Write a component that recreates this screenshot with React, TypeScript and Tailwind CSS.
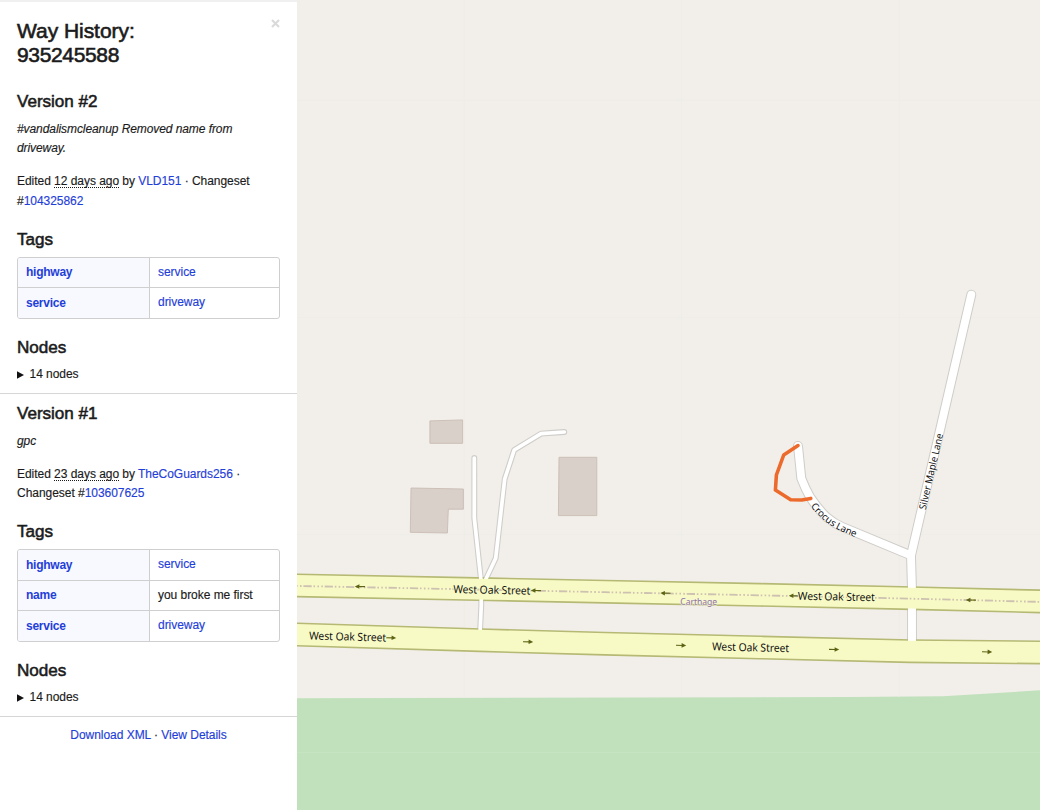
import type { ReactNode } from 'react';

type Tag = { k: string; v: string; plain?: boolean };

const link = 'text-[#1f40d8]';

function H4({ children, className = '' }: { children: ReactNode; className?: string }) {
  return (
    <h4 className={`h-6 text-[17.1px] leading-6 text-[#1b1b1b] [-webkit-text-stroke:0.55px_#1b1b1b] ${className}`}>
      {children}
    </h4>
  );
}

function TagTable({ tags }: { tags: Tag[] }) {
  return (
    <div className="w-[263px] overflow-hidden rounded-[3px] border border-[#cfcfcf]">
      {tags.map((t, i) => (
        <div key={t.k} className={`flex ${i > 0 ? 'h-[30.7px] border-t border-[#cfcfcf]' : 'h-[29.4px]'}`}>
          <div className="w-[132px] border-r border-[#cfcfcf] bg-[#f8f8ff] pt-[5.6px] pl-2 font-bold tracking-[-0.25px] [-webkit-text-stroke:0px]">
            <a className={link}>{t.k}</a>
          </div>
          <div className="pt-[5px] pl-2">{t.plain ? t.v : <a className={link}>{t.v}</a>}</div>
        </div>
      ))}
    </div>
  );
}

function Version({ title, comment, meta, tags }: { title: string; comment: ReactNode; meta: ReactNode; tags: Tag[] }) {
  return (
    <section className="border-b border-[#d6d6d6] pr-[17px] pb-[8.4px] pl-[17px]">
      <H4>{title}</H4>
      <p className="mt-[5.8px] tracking-[-0.08px] italic">{comment}</p>
      <p className="mt-[13.6px]">{meta}</p>
      <H4 className="mt-[16.6px]">Tags</H4>
      <div className="mt-[5.2px]">
        <TagTable tags={tags} />
      </div>
      <H4 className="mt-[17px]">Nodes</H4>
      <div className="mt-[5.2px] flex items-center gap-[5.5px]">
        <svg width="7" height="8" viewBox="0 0 7 8">
          <path d="M0 .2 7 4 0 7.8z" fill="#111" />
        </svg>
        <span>14 nodes</span>
      </div>
    </section>
  );
}

function Ago({ children }: { children: ReactNode }) {
  return (
    <span className="underline decoration-dotted decoration-1 underline-offset-[1.5px] [text-decoration-skip-ink:none]">
      {children}
    </span>
  );
}

function Sidebar() {
  return (
    <aside className="flex w-[297px] shrink-0 flex-col border-t-2 border-[#f0f0f0] bg-white">
      <header className="flex justify-between pt-[17.3px] pr-[17px] pl-[17px]">
        <h2 className="text-[21px] leading-6 text-[#1b1b1b] [-webkit-text-stroke:0.6px_#1b1b1b]">
          Way History:
          <br />
          <span className="tracking-[-0.35px]">935245588</span>
        </h2>
        <svg className="mr-[0.5px]" width="9" height="9" viewBox="0 0 9 9">
          <path d="M1 1 8 8M8 1 1 8" stroke="#dadada" strokeWidth="2.1" />
        </svg>
      </header>
      <div className="h-[22.6px]" />
      <Version
        title="Version #2"
        comment={<>#vandalismcleanup Removed name from<br />driveway.</>}
        meta={
          <>
            Edited <Ago>12 days ago</Ago> by <a className={link}>VLD151</a> · Changeset
            <br />#<a className={link}>104325862</a>
          </>
        }
        tags={[{ k: 'highway', v: 'service' }, { k: 'service', v: 'driveway' }]}
      />
      <div className="h-[8px]" />
      <Version
        title="Version #1"
        comment="gpc"
        meta={
          <>
            Edited <Ago>23 days ago</Ago> by <a className={link}>TheCoGuards256</a> ·
            <br />
            Changeset #<a className={link}>103607625</a>
          </>
        }
        tags={[
          { k: 'highway', v: 'service' },
          { k: 'name', v: 'you broke me first', plain: true },
          { k: 'service', v: 'driveway' },
        ]}
      />
      <footer className="pt-[8.8px] text-center">
        <a className={link}>Download XML</a> · <a className={link}>View Details</a>
      </footer>
    </aside>
  );
}

const NORTH = 'M290 585.3 490 589.3 605 591.7 760 594.8 912 598.2 1045 601.5';
const SOUTH = 'M290 634.3 480 640.2 605 643.7 760 647.5 910 651.2 1045 652.5';
const LANES = 'M798 446 801.3 478.3Q805 488 810 497Q818 509 826.7 517.3Q834 523.5 841.7 526.7L910.7 555.3M971.3 294.7 911 555.5 912 590V645';
const DRIVES = 'M474.3 458V518L481 580 481.3 605 480 633M564.3 432 541 433.7 514.2 450 504.7 479 495.7 558.3 484.5 582';
const WEST_ARROWS = [[360, 586.5], [536, 590.5], [665.5, 593.2], [794, 595.8], [971, 600]];
const EAST_ARROWS = [[391, 637.8], [528, 641.8], [681, 645.4], [834, 649.5], [987, 651.9]];

function MapView() {
  return (
    <svg className="block h-[810px] min-w-0 flex-1" viewBox="297 0 743 810">
      <rect x="297" width="743" height="810" fill="#f2efea" />
      <path d="M290 698.2 640 697.6 850 697 943 696.3 1045 690V815H290z" fill="#c0e1bb" />
      <path d="M297 100h743M297 317.7h743M297 534.5h743M464 0v698M681.5 0v697M899 0v697" stroke="#eeece6" strokeWidth="0.8" />
      <path d="M297 752.5h743" stroke="#c8e4c3" strokeWidth="0.8" />
      <g fill="#d9d0c9" stroke="#c9bcb3" strokeWidth="0.9">
        <path d="M429.9 420.9 462.6 419.9V443.3H429.9z" />
        <path d="M411 488 463.4 489V509.2H448.3L447.4 533 410.3 532.3z" />
        <path d="M559 457.3H596.8V515.6H558.4z" />
      </g>
      <g fill="none" strokeLinejoin="round">
        <path d={DRIVES} stroke="#cfcdc9" strokeWidth="5.8" strokeLinecap="round" />
        <path d={LANES} stroke="#cfcdc9" strokeWidth="9.9" strokeLinecap="round" />
        <path d={NORTH} stroke="#b5b974" strokeWidth="24" />
        <path d={SOUTH} stroke="#b5b974" strokeWidth="24" />
        <path d={DRIVES} stroke="#fff" strokeWidth="3.7" strokeLinecap="round" />
        <path d={LANES} stroke="#fff" strokeWidth="7.9" strokeLinecap="round" />
        <path d={NORTH} stroke="#f8fac5" strokeWidth="20.8" />
        <path d={SOUTH} stroke="#f8fac5" strokeWidth="20.8" />
        <path
          d={NORTH}
          transform="translate(0 0.5)"
          stroke="#cdc1b1"
          strokeWidth="1.8"
          strokeDasharray="8.3 1.8 1.6 2.3 1.6 2.3 1.6 1.8"
          strokeDashoffset="7.9"
        />
        <path
          d="M798 445.6 783.7 455 776.4 475 775.4 490 790.7 499.8 801.7 500 810.8 498.4"
          stroke="#ec6b2c"
          strokeWidth="3.6"
          strokeLinecap="round"
        />
      </g>
      <g fill="#5d6314" stroke="#5d6314" strokeWidth="1.1">
        {WEST_ARROWS.map(([x, y]) => (
          <g key={x} transform={`translate(${x} ${y}) rotate(1)`}>
            <path d="M5 0H-2" />
            <path d="M-5.2 0 -0.6 -2.3V2.3z" stroke="none" />
          </g>
        ))}
        {EAST_ARROWS.map(([x, y]) => (
          <g key={x} transform={`translate(${x} ${y}) rotate(1)`}>
            <path d="M-5 0H2" />
            <path d="M5.2 0 0.6 -2.3V2.3z" stroke="none" />
          </g>
        ))}
      </g>
      <path id="crocus" d="M810.5 506.3Q819.5 518 833.5 527.2Q844 533 870 543.4" fill="none" />
      <g
        className="[font-family:'Noto_Sans',sans-serif] [paint-order:stroke]"
        fontSize="11"
        fill="#111"
        strokeWidth="2"
        strokeLinejoin="round"
      >
        <g stroke="#f8fac5">
          <text transform="translate(453.2 593) rotate(1.2)" textLength="77" lengthAdjust="spacingAndGlyphs">West Oak Street</text>
          <text transform="translate(797.8 599.7) rotate(1.1)" textLength="77" lengthAdjust="spacingAndGlyphs">West Oak Street</text>
          <text transform="translate(309 639.4) rotate(1.6)" textLength="77" lengthAdjust="spacingAndGlyphs">West Oak Street</text>
          <text transform="translate(712 650.3) rotate(1.4)" textLength="77" lengthAdjust="spacingAndGlyphs">West Oak Street</text>
        </g>
        <g stroke="#fff" fontSize="10" strokeWidth="1">
          <text transform="translate(925.7 510.3) rotate(-77)" textLength="78" lengthAdjust="spacingAndGlyphs">Silver Maple Lane</text>
          <text fontSize="9.7">
            <textPath href="#crocus">Crocus Lane</textPath>
          </text>
        </g>
        <text x="680.3" y="605.3" fontSize="9" fill="#8d7499" stroke="#f7f4e2" strokeWidth="1" textLength="36.8" lengthAdjust="spacingAndGlyphs">
          Carthage
        </text>
      </g>
    </svg>
  );
}

export default function App() {
  return (
    <div className="flex h-[810px] w-[1040px] overflow-hidden bg-white text-[12px] leading-[19.4px] tracking-[-0.04px] text-[#1b1b1b] [font-family:'Liberation_Sans',Arial,sans-serif] [-webkit-text-stroke:0.15px]">
      <Sidebar />
      <MapView />
    </div>
  );
}
